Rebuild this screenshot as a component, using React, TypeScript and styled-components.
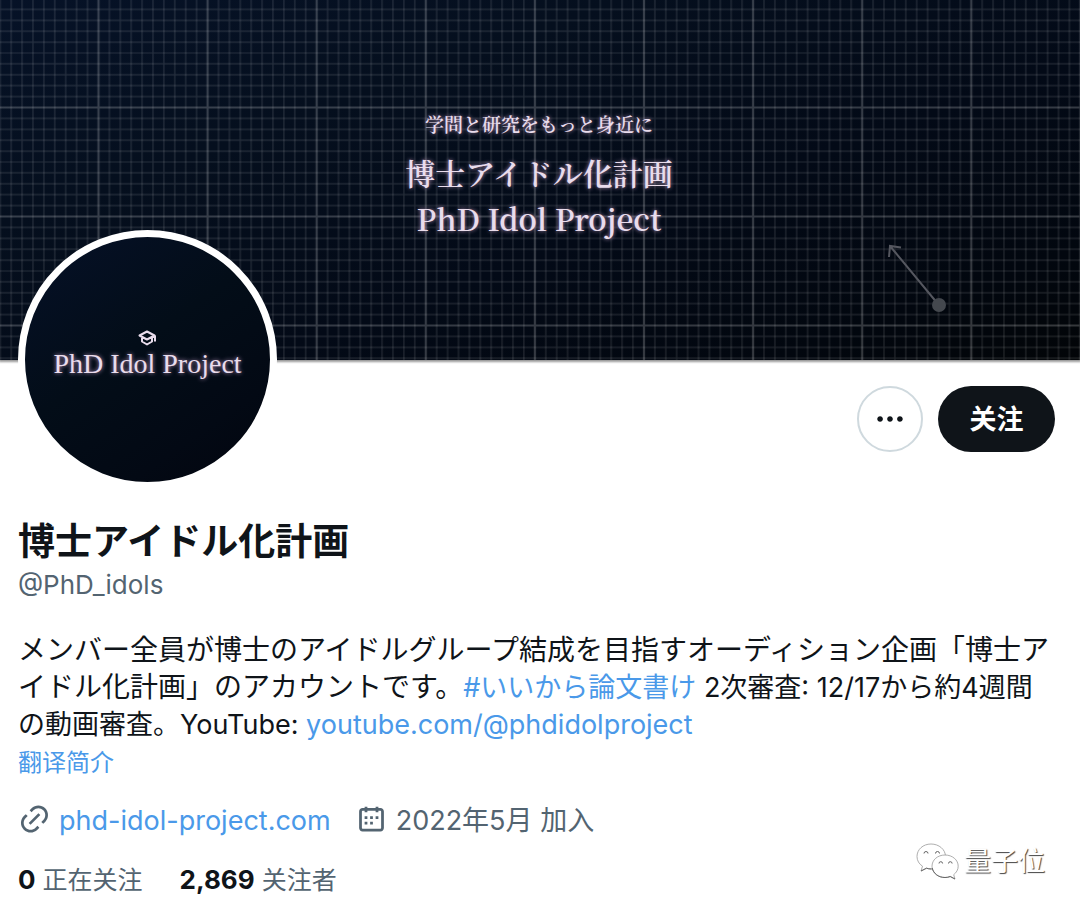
import React from 'react';
import styled, { createGlobalStyle } from 'styled-components';

const GlobalStyle = createGlobalStyle`
  * { box-sizing: border-box; }
  body {
    margin: 0;
    background: #fff;
    color: #0f1419;
    font-family: Inter, "Noto Sans CJK JP", sans-serif;
  }
  :lang(zh) { font-family: Inter, "Noto Sans CJK SC", sans-serif; }
  a { color: #4a99e9; text-decoration: none; }
  a:hover { text-decoration: underline; }
`;

const Page = styled.main`
  position: relative;
  width: 100%;
  overflow: hidden;
`;

const Banner = styled.header`
  position: relative;
  display: flex;
  flex-direction: column;
  align-items: center;
  aspect-ratio: 3 / 1;
  padding-top: 109px;
  background: linear-gradient(160deg, #061227 0%, #050f1e 30%, #030a17 60%, #02070f 85%, #020508 100%);
  box-shadow: 0 1px 2px 1px #999;
  font-family: "Noto Serif CJK JP", "Liberation Serif", "Noto Sans CJK JP", serif;
  color: #e9dcec;
  text-align: center;
`;

const BannerArt = styled.svg`
  position: absolute;
  inset: 0;
  width: 100%;
  height: 100%;
`;

const BannerText = styled.p<{ $size: number; $line: number }>`
  position: relative;
  margin: 0;
  padding-right: 2px;
  font-size: ${(p) => p.$size}px;
  line-height: ${(p) => p.$line}px;
  font-weight: 600;
  text-shadow: 0 0 4px #a98caf;
`;

const Profile = styled.section`
  padding: 0 18px 8px;
`;

const Top = styled.div`
  display: flex;
  justify-content: space-between;
  align-items: flex-start;
  padding-right: 7px;
`;

const Avatar = styled.div`
  position: relative;
  display: flex;
  flex-direction: column;
  align-items: center;
  width: 259px;
  height: 259px;
  margin-top: -130px;
  padding-top: 93px;
  border: 7px solid #fff;
  border-radius: 50%;
  background: linear-gradient(145deg, #051025 10%, #030d18 45%, #030914 75%, #02050e 100%) border-box;
  font-family: "Liberation Serif", serif;
  font-size: 28px;
  line-height: 36px;
  color: #e9dcec;
  text-shadow: 0 0 4px #b795bd;
  white-space: nowrap;
`;

const Actions = styled.div`
  display: flex;
  gap: 15px;
  margin-top: 26px;
`;

const MoreButton = styled.button`
  display: flex;
  align-items: center;
  justify-content: center;
  width: 66px;
  height: 66px;
  padding: 0;
  border: 2px solid #cfd9de;
  border-radius: 33px;
  background: #fff;
  color: #0f1419;
  cursor: pointer;
`;

const FollowButton = styled.button`
  width: 117px;
  height: 66px;
  padding: 0 0 3px;
  border: 0;
  border-radius: 33px;
  background: #0f1419;
  color: #fff;
  font-family: Inter, "Noto Sans CJK SC", sans-serif;
  font-size: 27px;
  font-weight: 700;
  cursor: pointer;
`;

const Name = styled.h1`
  margin: 30px 0 0;
  font-size: 37px;
  line-height: 46px;
  font-weight: 700;
`;

const Handle = styled.p`
  margin: 0;
  font-size: 26px;
  line-height: 40px;
  color: #536471;
`;

const Bio = styled.p`
  margin: 27px 0 0;
  padding-right: 6px;
  font-size: 28px;
  line-height: 37px;
`;

const Compact = styled.span`
  font-size: 27px;
`;

const Translate = styled.a`
  display: block;
  font-size: 24px;
  line-height: 40px;
`;

const Row = styled.div<{ $gap: number; $top: number }>`
  display: flex;
  align-items: center;
  gap: ${(p) => p.$gap}px;
  margin-top: ${(p) => p.$top}px;
  font-size: 27px;
  line-height: 40px;
  color: #536471;
`;

const Meta = styled.span`
  display: flex;
  align-items: center;
  gap: 8px;
`;

const Icon = styled.svg`
  width: 34px;
  height: 34px;
  fill: currentColor;
`;

const MetaIcon = styled(Icon)`
  width: 33px;
  margin-bottom: 4px;
`;

const Stat = styled.a`
  font-size: 25px;
  && { color: #536471; }
  b { font-size: 26px; color: #0f1419; }
`;

const Watermark = styled.div`
  position: absolute;
  right: 35px;
  bottom: 26px;
  display: flex;
  align-items: center;
  gap: 4px;
  font-size: 27px;
  line-height: 40px;
  color: #fff;
  text-shadow: 1px 1px 1px #444;
`;

const minor = Array.from({ length: 9 }, (_, i) => (i + 1) * 10.9);

function BannerGrid() {
  return (
    <BannerArt viewBox="0 0 1080 360" preserveAspectRatio="xMidYMid slice" aria-hidden="true">
      <defs>
        <pattern id="grid" x="98.5" y="107.5" width="109.1" height="109" patternUnits="userSpaceOnUse">
          <g stroke="#fff" strokeOpacity="0.13" strokeWidth="1.2">
            {minor.map((n) => (
              <path key={n} d={`M${n} 0V109M0 ${n}H109.1`} />
            ))}
          </g>
          <path d="M0 0V109M0 0H109.1M109.1 0V109M0 109H109.1" stroke="#fff" strokeOpacity="0.2" strokeWidth="2.2" />
        </pattern>
      </defs>
      <rect width="1080" height="360" fill="url(#grid)" />
      <g stroke="#55575f" strokeWidth="2" fill="none">
        <path d="M938 304L890 246M901 247.500L890 246L889 257" />
        <circle cx="939" cy="305" r="7" fill="#44484e" stroke="none" />
      </g>
    </BannerArt>
  );
}

function CapIcon() {
  return (
    <svg width="20" height="16" viewBox="0 0 20 16" fill="none" stroke="#e9dcec" strokeWidth="2" strokeLinejoin="round" aria-hidden="true">
      <path d="M1.500 5.500L9 1.500L16.500 5.500L9 9.500ZM4 8V11.500L9 14.500L14 11.500V8M17 5.500V11.500" />
    </svg>
  );
}

function ChatMark() {
  return (
    <svg width="44" height="38" viewBox="0 0 44 38" fill="#fff" aria-hidden="true">
      <g stroke="#999" strokeWidth="0.8">
        <path d="M15 1C7 1 1 6.500 1 13.500C1 17.500 3 21 6.500 23.200L5 28L10.500 25.200C12 25.700 13.500 26 15 26C23 26 29.500 20.500 29.500 13.500C29.500 6.500 23 1 15 1Z" />
        <path d="M29 12C21.500 12 16 17 16 23.200C16 29.500 21.500 34.500 29 34.500C31 34.500 32.600 34.200 34.200 33.500L39 36L37.700 31.700C40.500 29.500 42.200 26.500 42.200 23.200C42.200 17 36.500 12 29 12Z" />
      </g>
      <g fill="none" stroke="#666" strokeWidth="1">
        <path d="M5 28L10.500 25.200C12 25.700 13.500 26 15.500 26" />
        <path d="M16.200 25C17.500 30.500 22.500 34.500 29 34.500C31 34.500 32.600 34.200 34.200 33.500L39 36" />
        <path d="M8 10.500a2 2 0 0 1 4 0M19.500 10.500a2 2 0 0 1 4 0M23 20.500a1.800 1.800 0 0 1 3.600 0M32.500 20.500a1.800 1.800 0 0 1 3.600 0" />
      </g>
    </svg>
  );
}

export default function App() {
  return (
    <Page lang="ja">
      <GlobalStyle />
      <Banner>
        <BannerGrid />
        <BannerText $size={19} $line={30}>学問と研究をもっと身近に</BannerText>
        <BannerText $size={30} $line={66}>博士アイドル化計画</BannerText>
        <BannerText $size={30} $line={26}>PhD Idol Project</BannerText>
      </Banner>
      <Profile>
        <Top>
          <Avatar>
            <CapIcon />
            PhD Idol Project
          </Avatar>
          <Actions>
            <MoreButton type="button" aria-label="更多">
              <Icon viewBox="0 0 24 24" aria-hidden="true">
                <path d="M3 12c0-1.100.9-2 2-2s2 .9 2 2-.9 2-2 2-2-.9-2-2zm9 2c1.100 0 2-.9 2-2s-.9-2-2-2-2 .9-2 2 .9 2 2 2zm7 0c1.100 0 2-.9 2-2s-.9-2-2-2-2 .9-2 2 .9 2 2 2z" />
              </Icon>
            </MoreButton>
            <FollowButton type="button" lang="zh">关注</FollowButton>
          </Actions>
        </Top>
        <Name>博士アイドル化計画</Name>
        <Handle>@PhD_idols</Handle>
        <Bio>
          メンバー全員が博士のアイドルグループ結成を目指すオーディション企画「博士アイドル化計画」のアカウントです。<Compact><a href="#hashtag">#いいから論文書け</a> 2次審査: 12/17から約4週間の動画審査。YouTube: <a href="#youtube">youtube.com/@phdidolproject</a></Compact>
        </Bio>
        <Translate href="#translate" lang="zh">翻译简介</Translate>
        <Row $gap={24} $top={18}>
          <Meta>
            <MetaIcon viewBox="0 0 24 24" aria-hidden="true">
              <path d="M18.360 5.640c-1.950-1.960-5.110-1.960-7.070 0L9.880 7.050 8.460 5.640l1.420-1.420c2.730-2.730 7.160-2.730 9.900 0 2.730 2.740 2.730 7.170 0 9.900l-1.420 1.420-1.410-1.420 1.410-1.410c1.960-1.960 1.960-5.120 0-7.070zm-2.120 3.530l-7.070 7.070-1.410-1.410 7.070-7.070 1.410 1.410zm-12.020.710l1.420-1.420 1.410 1.420-1.410 1.410c-1.960 1.960-1.960 5.120 0 7.070 1.950 1.960 5.110 1.960 7.070 0l1.410-1.410 1.420 1.410-1.420 1.420c-2.730 2.730-7.160 2.730-9.900 0-2.730-2.740-2.730-7.170 0-9.900z" />
            </MetaIcon>
            <a href="#website">phd-idol-project.com</a>
          </Meta>
          <Meta lang="zh">
            <MetaIcon viewBox="0 0 24 24" aria-hidden="true">
              <path d="M7 4V3h2v1h6V3h2v1h1.500C19.890 4 21 5.120 21 6.500v12c0 1.380-1.110 2.500-2.500 2.500h-13C4.120 21 3 19.880 3 18.500v-12C3 5.120 4.120 4 5.500 4H7zm0 2H5.500c-.270 0-.5.220-.5.500v12c0 .280.230.5.5.5h13c.280 0 .5-.220.5-.5v-12c0-.280-.220-.5-.5-.5H17v1h-2V6H9v1H7V6zm0 6h2v-2H7v2zm0 4h2v-2H7v2zm4-4h2v-2h-2v2zm0 4h2v-2h-2v2zm4-4h2v-2h-2v2z" />
            </MetaIcon>
            2022年5月 加入
          </Meta>
        </Row>
        <Row $gap={37} $top={19} lang="zh">
          <Stat href="#following"><b>0</b> 正在关注</Stat>
          <Stat href="#followers"><b>2,869</b> 关注者</Stat>
        </Row>
      </Profile>
      <Watermark lang="zh">
        <ChatMark />
        量子位
      </Watermark>
    </Page>
  );
}
